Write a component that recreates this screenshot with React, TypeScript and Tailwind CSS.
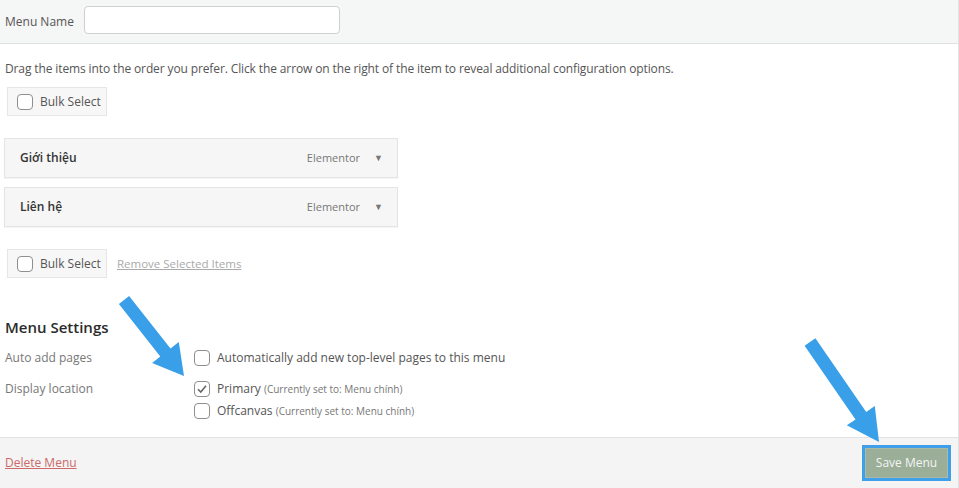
import React from "react";

function arrowPoints(x1: number, y1: number, x2: number, y2: number, shaft: number, headW: number, headL: number) {
  const dx = x2 - x1;
  const dy = y2 - y1;
  const len = Math.sqrt(dx * dx + dy * dy);
  const ux = dx / len;
  const uy = dy / len;
  const px = -uy;
  const py = ux;
  const bx = x2 - ux * headL;
  const by = y2 - uy * headL;
  const pts = [
    [x1 + px * shaft / 2, y1 + py * shaft / 2],
    [bx + px * shaft / 2, by + py * shaft / 2],
    [bx + px * headW / 2, by + py * headW / 2],
    [x2, y2],
    [bx - px * headW / 2, by - py * headW / 2],
    [bx - px * shaft / 2, by - py * shaft / 2],
    [x1 - px * shaft / 2, y1 - py * shaft / 2],
  ];
  return pts.map((p) => p[0].toFixed(1) + "," + p[1].toFixed(1)).join(" ");
}

function Checkbox({ checked = false }: { checked?: boolean }) {
  return (
    <span className="inline-flex w-[16px] h-[16px] shrink-0 items-center justify-center rounded-[4px] border border-[#8f8f8f] bg-white">
      {checked && (
        <svg width="12" height="12" viewBox="0 0 12 12">
          <path d="M2 6.2 L4.8 9 L10 2.8" fill="none" stroke="#666" strokeWidth="1.6" />
        </svg>
      )}
    </span>
  );
}

function BulkSelect() {
  return (
    <div className="flex items-center gap-[7px] w-[100px] h-[29px] pl-[9px] bg-[#f7f7f7] border border-[#e6e6e6] text-[12px] text-[#555] whitespace-nowrap">
      <Checkbox />
      <span>Bulk Select</span>
    </div>
  );
}

function MenuItem({ title }: { title: string }) {
  return (
    <div className="flex items-center w-[394px] h-[40px] ml-[-1px] pl-[15px] pr-[14px] bg-[#f6f6f6] border border-[#e4e4e4] shadow-[0_1px_1px_rgba(0,0,0,0.04)]">
      <span className="flex-1 text-[12px] font-semibold text-[#333]">{title}</span>
      <span className="text-[11px] text-[#777]">Elementor</span>
      <span className="ml-[14px] text-[9px] text-[#777]">▼</span>
    </div>
  );
}

export default function App() {
  return (
    <div
      className="relative w-[959px] h-[488px] bg-white border-r border-[#e2e2e2] flex flex-col overflow-hidden"
      style={{ fontFamily: "'Open Sans', 'Noto Sans', sans-serif" }}
    >
      <div className="flex items-center h-[44px] px-[5px] bg-[#f5f6f6] border-b border-[#e0e0e0]">
        <span className="w-[79px] text-[12px] text-[#555]">Menu Name</span>
        <div className="w-[256px] h-[28px] mb-[4px] bg-white border border-[#cfcfcf] rounded-[4px]" />
      </div>

      <div className="flex-1 px-[5px] flex flex-col">
        <p className="mt-[16px] text-[12px] leading-[18px] tracking-[-0.12px] text-[#555]">
          Drag the items into the order you prefer. Click the arrow on the right of the item to reveal additional configuration options.
        </p>
        <div className="mt-[9px] ml-[2px]">
          <BulkSelect />
        </div>

        <div className="mt-[22px] flex flex-col gap-[9px]">
          <MenuItem title="Giới thiệu" />
          <MenuItem title="Liên hệ" />
        </div>

        <div className="mt-[22px] ml-[2px] flex items-center gap-[10px]">
          <BulkSelect />
          <span className="text-[11.5px] text-[#aaa] underline">Remove Selected Items</span>
        </div>

        <h2 className="mt-[38px] text-[15px] font-semibold text-[#2b2b2b] leading-[22px]">Menu Settings</h2>

        <div className="mt-[10px] flex">
          <span className="w-[189px] pt-[1px] text-[12px] text-[#777]">Auto add pages</span>
          <div className="flex items-center gap-[7px]">
            <Checkbox />
            <span className="text-[12px] text-[#555]">Automatically add new top-level pages to this menu</span>
          </div>
        </div>

        <div className="mt-[13px] flex">
          <span className="w-[189px] text-[12px] text-[#777]">Display location</span>
          <div className="flex flex-col gap-[4px]">
            <div className="flex items-center gap-[7px]">
              <Checkbox checked />
              <span className="text-[12px] text-[#555]">
                Primary <span className="text-[10px] text-[#777]">(Currently set to: Menu chính)</span>
              </span>
            </div>
            <div className="flex items-center gap-[7px]">
              <Checkbox />
              <span className="text-[12px] text-[#555]">
                Offcanvas <span className="text-[10px] text-[#777]">(Currently set to: Menu chính)</span>
              </span>
            </div>
          </div>
        </div>
      </div>

      <div className="h-[51px] flex items-center justify-between pl-[5px] pr-[7px] bg-[#f4f4f4] border-t border-[#e2e2e2]">
        <span className="text-[12px] text-[#cc6a6a] underline">Delete Menu</span>
        <div className="p-[3px] bg-[#3f9fe8]">
          <div className="flex items-center justify-center w-[83px] h-[30px] bg-[#9aae98] border border-[#a9bba6] text-[12px] text-[#f4f4f4]">
            Save Menu
          </div>
        </div>
      </div>

      <svg className="absolute inset-0 pointer-events-none" width="959" height="488">
        <polygon points={arrowPoints(124, 300, 184, 376, 13, 34, 30)} fill="#3a9fe9" />
        <polygon points={arrowPoints(810, 342, 879, 442, 13, 34, 32)} fill="#3a9fe9" />
      </svg>
    </div>
  );
}
